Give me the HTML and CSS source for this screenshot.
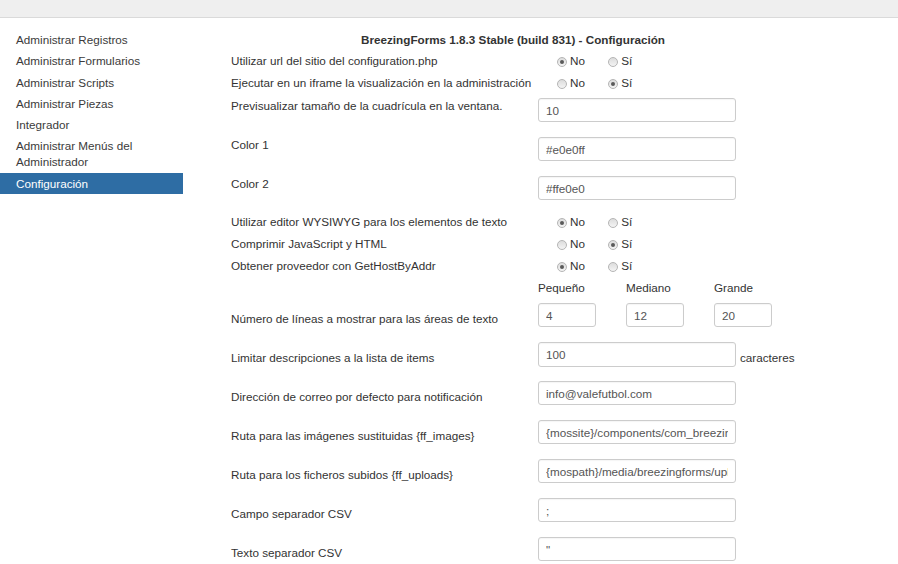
FILE: index.html
```html
<!DOCTYPE html>
<html lang="es">
<head>
    <meta charset="UTF-8">
    <title>BreezingForms - Configuración</title>
    <link rel="stylesheet" href="styles.css">
</head>
<body>
    <div class="topbar"></div>

    <div class="page">
        <ul class="sidemenu">
            <li>Administrar Registros</li>
            <li>Administrar Formularios</li>
            <li>Administrar Scripts</li>
            <li>Administrar Piezas</li>
            <li>Integrador</li>
            <li>Administrar Menús del Administrador</li>
            <li class="active">Configuración</li>
        </ul>

        <div class="config">
            <div class="title">BreezingForms 1.8.3 Stable (build 831) - Configuración</div>

            <div class="row radio-row">
                <div class="lbl">Utilizar url del sitio del configuration.php</div>
                <div class="ctl">
                    <label class="opt"><span class="radio checked"></span>No</label>
                    <label class="opt"><span class="radio"></span>Sí</label>
                </div>
            </div>
            <div class="row radio-row">
                <div class="lbl">Ejecutar en un iframe la visualización en la administración</div>
                <div class="ctl">
                    <label class="opt"><span class="radio"></span>No</label>
                    <label class="opt"><span class="radio checked"></span>Sí</label>
                </div>
            </div>
            <div class="row input-row">
                <div class="lbl">Previsualizar tamaño de la cuadrícula en la ventana.</div>
                <div class="ctl"><input type="text" class="inp" value="10"></div>
            </div>
            <div class="row input-row">
                <div class="lbl">Color 1</div>
                <div class="ctl"><input type="text" class="inp" value="#e0e0ff"></div>
            </div>
            <div class="row input-row">
                <div class="lbl">Color 2</div>
                <div class="ctl"><input type="text" class="inp" value="#ffe0e0"></div>
            </div>

            <div class="row radio-row">
                <div class="lbl">Utilizar editor WYSIWYG para los elementos de texto</div>
                <div class="ctl">
                    <label class="opt"><span class="radio checked"></span>No</label>
                    <label class="opt"><span class="radio"></span>Sí</label>
                </div>
            </div>
            <div class="row radio-row">
                <div class="lbl">Comprimir JavaScript y HTML</div>
                <div class="ctl">
                    <label class="opt"><span class="radio"></span>No</label>
                    <label class="opt"><span class="radio checked"></span>Sí</label>
                </div>
            </div>
            <div class="row radio-row">
                <div class="lbl">Obtener proveedor con GetHostByAddr</div>
                <div class="ctl">
                    <label class="opt"><span class="radio checked"></span>No</label>
                    <label class="opt"><span class="radio"></span>Sí</label>
                </div>
            </div>

            <div class="row radio-row">
                <div class="lbl"></div>
                <div class="ctl sizes">
                    <span>Pequeño</span>
                    <span>Mediano</span>
                    <span>Grande</span>
                </div>
            </div>
            <div class="row input-row mid">
                <div class="lbl">Número de líneas a mostrar para las áreas de texto</div>
                <div class="ctl sizes">
                    <span><input type="text" class="inp small" value="4"></span>
                    <span><input type="text" class="inp small" value="12"></span>
                    <span><input type="text" class="inp small" value="20"></span>
                </div>
            </div>

            <div class="row input-row mid">
                <div class="lbl">Limitar descripciones a la lista de items</div>
                <div class="ctl withunit"><input type="text" class="inp" value="100"><span class="unit">caracteres</span></div>
            </div>
            <div class="row input-row mid">
                <div class="lbl">Dirección de correo por defecto para notificación</div>
                <div class="ctl"><input type="text" class="inp" value="info@valefutbol.com"></div>
            </div>
            <div class="row input-row mid">
                <div class="lbl">Ruta para las imágenes sustituidas {ff_images}</div>
                <div class="ctl"><input type="text" class="inp" value="{mossite}/components/com_breezingforms/images"></div>
            </div>
            <div class="row input-row mid">
                <div class="lbl">Ruta para los ficheros subidos {ff_uploads}</div>
                <div class="ctl"><input type="text" class="inp" value="{mospath}/media/breezingforms/uploads"></div>
            </div>
            <div class="row input-row mid">
                <div class="lbl">Campo separador CSV</div>
                <div class="ctl"><input type="text" class="inp" value=";"></div>
            </div>
            <div class="row input-row mid">
                <div class="lbl">Texto separador CSV</div>
                <div class="ctl"><input type="text" class="inp" value="&quot;"></div>
            </div>
        </div>
    </div>
</body>
</html>
```

FILE: styles.css
```css
body {
    margin: 0;
    font-family: "Liberation Sans", Arial, sans-serif;
    font-size: 11.7px;
    color: #333;
    background: #fff;
}
.topbar {
    height: 17px;
    background-color: #efefef;
    border-bottom: 1px solid #dadada;
}
.page {
    display: flex;
    align-items: flex-start;
}
.sidemenu {
    width: 183px;
    flex-shrink: 0;
    margin: 11px 0 0 0;
    padding: 0;
    list-style: none;
}
.sidemenu li {
    padding: 3px 16px 3px 16px;
    line-height: 15.3px;
    color: #3b3b3b;
}
.sidemenu li.active {
    background-color: #2e6da4;
    color: #fff;
    padding-top: 3px;
    padding-bottom: 3px;
    margin-top: 1px;
}
.config {
    width: 564px;
    margin-left: 48px;
    padding-top: 12px;
}
.title {
    text-align: center;
    font-weight: bold;
    line-height: 15px;
    padding: 2px 0 3px 0;
}
.row {
    display: flex;
}
.lbl {
    width: 307px;
    flex-shrink: 0;
    white-space: nowrap;
}
.ctl {
    flex: 1;
}
.radio-row {
    height: 22px;
    line-height: 22px;
}
.input-row {
    height: 39px;
}
.input-row .lbl {
    padding-top: 4px;
    line-height: 15px;
}
.input-row .ctl {
    padding-top: 4px;
}
.input-row.mid {
    align-items: center;
}
.input-row.mid .lbl {
    padding-top: 0;
}
.input-row.mid .ctl {
    align-self: flex-start;
}
.opt {
    display: inline-block;
    color: #333;
}
.opt:first-child {
    margin-left: 19px;
    width: 48px;
}
.radio {
    display: inline-block;
    box-sizing: border-box;
    width: 10px;
    height: 10px;
    border: 1px solid #b5b5b5;
    border-radius: 50%;
    background: linear-gradient(#dcdcdc, #f4f4f4);
    margin-right: 3px;
    vertical-align: -2px;
    position: relative;
}
.radio.checked::after {
    content: "";
    position: absolute;
    left: 2px;
    top: 2px;
    width: 4px;
    height: 4px;
    border-radius: 50%;
    background: #5a5a5a;
}
.inp {
    box-sizing: border-box;
    width: 198px;
    height: 24px;
    margin: 0;
    padding: 0 7px;
    border: 1px solid #ccc;
    border-radius: 3px;
    font-family: "Liberation Sans", Arial, sans-serif;
    font-size: 11.7px;
    color: #555;
    background: #fff;
    box-shadow: inset 0 1px 1px rgba(0, 0, 0, 0.04);
}
.inp.small {
    width: 58px;
}
.sizes {
    display: flex;
}
.sizes span {
    width: 88px;
}
.withunit {
    display: flex;
    align-items: flex-end;
}
.withunit .inp {
    height: 25px;
}
.unit {
    margin-left: 4px;
    line-height: 15px;
    margin-bottom: 2px;
}
```
